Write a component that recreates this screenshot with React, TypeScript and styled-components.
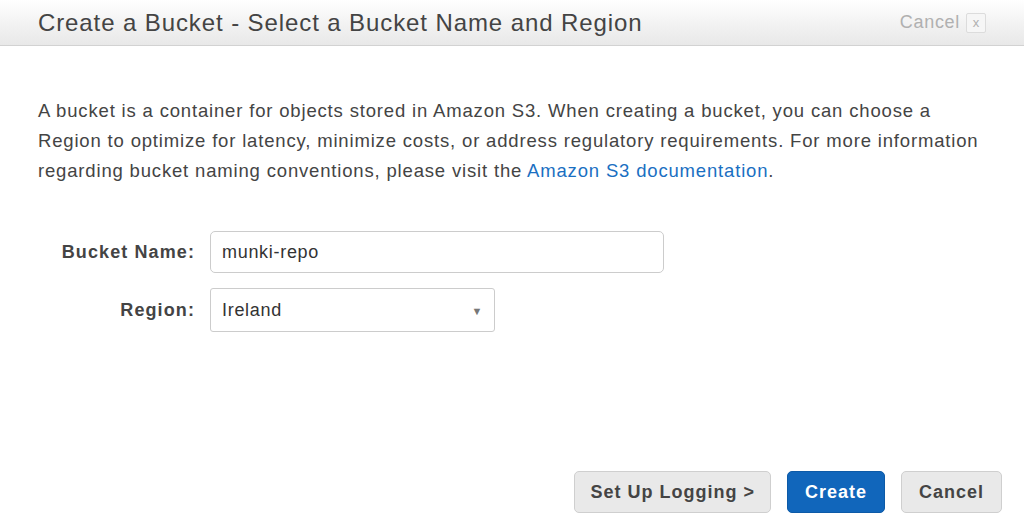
import React from 'react';
import styled, { createGlobalStyle } from 'styled-components';

const GlobalStyle = createGlobalStyle`
  html, body {
    margin: 0;
    padding: 0;
    background: #ffffff;
  }
  body {
    font-family: "Liberation Sans", Arial, sans-serif;
    color: #444444;
  }
`;

const Dialog = styled.div`
  display: flex;
  flex-direction: column;
  height: 525px;
  overflow: hidden;
`;

const Header = styled.div`
  display: flex;
  align-items: center;
  justify-content: space-between;
  height: 45px;
  padding: 0 38px;
  background: linear-gradient(to bottom, #ffffff 0%, #f3f3f3 50%, #e8e8e8 100%);
  border-bottom: 1px solid #d2d2d2;
  box-sizing: content-box;
`;

const Title = styled.h1`
  margin: 0;
  font-size: 24px;
  font-weight: normal;
  color: #444444;
  letter-spacing: 0.9px;
`;

const CloseLink = styled.a`
  display: flex;
  align-items: center;
  gap: 6px;
  font-size: 18px;
  letter-spacing: 0.7px;
  color: #b0b0b0;
  text-decoration: none;
  cursor: pointer;
`;

const CloseBox = styled.span`
  display: inline-flex;
  align-items: center;
  justify-content: center;
  width: 18px;
  height: 18px;
  border: 1px solid #dcdcdc;
  border-radius: 2px;
  background: #f6f6f6;
  font-size: 13px;
  letter-spacing: 0;
  color: #b0b0b0;
  line-height: 1;
`;

const Body = styled.div`
  flex: 1;
  display: flex;
  flex-direction: column;
  padding: 50px 38px 0 38px;
`;

const Intro = styled.p`
  margin: 0;
  font-size: 18.5px;
  line-height: 30px;
  letter-spacing: 0.83px;
  white-space: nowrap;
  color: #444444;
`;

const DocLink = styled.a`
  color: #1a6fc2;
  text-decoration: none;
`;

const Form = styled.div`
  display: grid;
  grid-template-columns: 157px auto;
  column-gap: 15px;
  row-gap: 15px;
  align-items: center;
  justify-items: start;
  margin-top: 45px;
`;

const Label = styled.label`
  justify-self: end;
  font-size: 18px;
  font-weight: bold;
  letter-spacing: 1.1px;
  color: #444444;
`;

const TextInput = styled.input<{ $width: number }>`
  box-sizing: border-box;
  width: ${(p) => p.$width}px;
  height: 42px;
  padding: 0 11px;
  font-family: "Liberation Sans", Arial, sans-serif;
  font-size: 18px;
  letter-spacing: 0.7px;
  color: #333333;
  border: 1px solid #cccccc;
  border-radius: 5px;
  background: #ffffff;
  outline: none;
`;

const SelectBox = styled.div<{ $width: number }>`
  box-sizing: border-box;
  display: flex;
  align-items: center;
  justify-content: space-between;
  width: ${(p) => p.$width}px;
  height: 44px;
  padding: 0 11px;
  font-size: 18px;
  letter-spacing: 0.7px;
  color: #333333;
  border: 1px solid #cccccc;
  border-radius: 3px;
  background: #ffffff;
`;

const Caret = styled.span`
  font-size: 11px;
  color: #777777;
  margin-top: 1px;
`;

const Footer = styled.div`
  margin-top: auto;
  display: flex;
  justify-content: flex-end;
  gap: 16px;
  padding: 0 22px 12px 0;
`;

const Button = styled.button<{ $primary?: boolean; $padX?: number }>`
  box-sizing: border-box;
  height: 42px;
  padding: 0 ${(p) => p.$padX ?? 15}px;
  font-family: "Liberation Sans", Arial, sans-serif;
  font-size: 18px;
  font-weight: bold;
  letter-spacing: 1px;
  border-radius: 5px;
  cursor: pointer;
  color: ${(p) => (p.$primary ? '#ffffff' : '#444444')};
  background: ${(p) => (p.$primary ? '#1166bb' : '#e9e9e9')};
  border: 1px solid ${(p) => (p.$primary ? '#0d5aa7' : '#cfcfcf')};
`;

export default function App() {
  return (
    <Dialog>
      <GlobalStyle />
      <Header>
        <Title>Create a Bucket - Select a Bucket Name and Region</Title>
        <CloseLink>
          Cancel
          <CloseBox>x</CloseBox>
        </CloseLink>
      </Header>
      <Body>
        <Intro>
          A bucket is a container for objects stored in Amazon S3. When creating a bucket, you can choose a
          <br />
          Region to optimize for latency, minimize costs, or address regulatory requirements. For more information
          <br />
          regarding bucket naming conventions, please visit the <DocLink>Amazon S3 documentation</DocLink>.
        </Intro>
        <Form>
          <Label>Bucket Name:</Label>
          <TextInput $width={454} defaultValue="munki-repo" />
          <Label>Region:</Label>
          <SelectBox $width={285}>
            Ireland
            <Caret>▼</Caret>
          </SelectBox>
        </Form>
      </Body>
      <Footer>
        <Button>Set Up Logging &gt;</Button>
        <Button $primary $padX={17}>Create</Button>
        <Button $padX={17}>Cancel</Button>
      </Footer>
    </Dialog>
  );
}
